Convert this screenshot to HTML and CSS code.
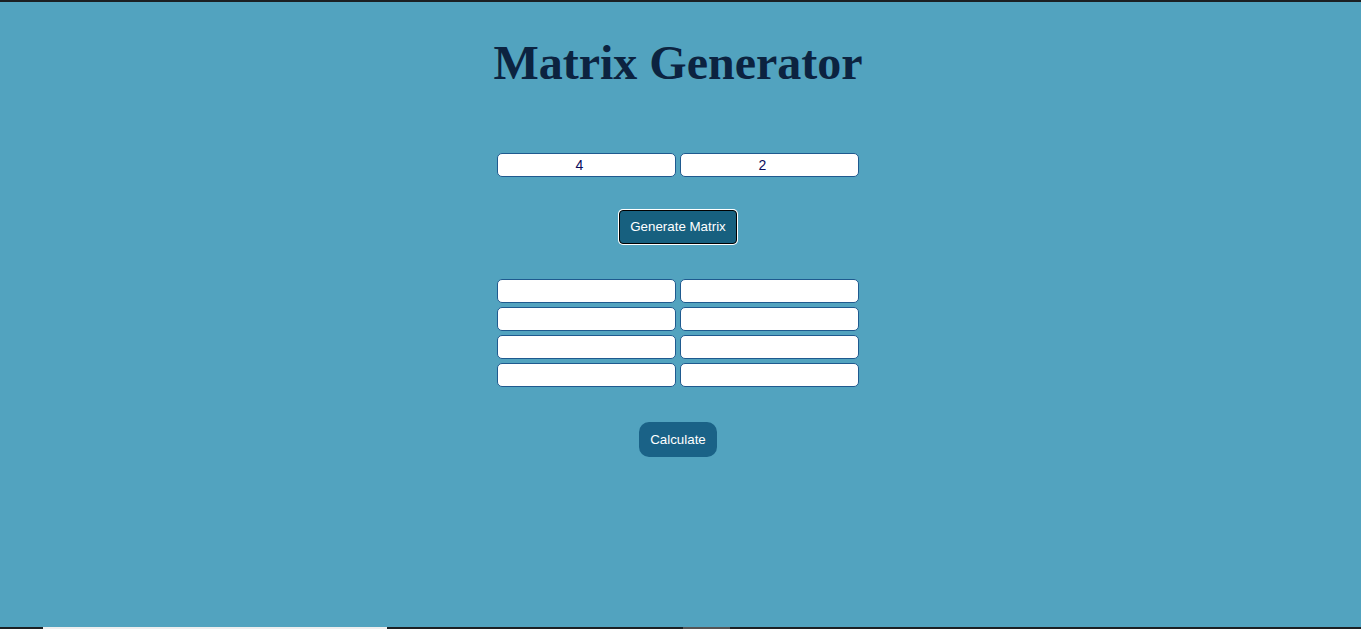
FILE: index.html
```html
<!DOCTYPE html>
<html lang="en">
<head>
<meta charset="utf-8">
<title>Matrix Generator</title>
<link rel="stylesheet" href="styles.css">
</head>
<body>
<main class="page">
  <h1 class="title">Matrix Generator</h1>
  <div class="dims">
    <input class="cell" type="text" value="4">
    <input class="cell" type="text" value="2">
  </div>
  <button class="gen-btn" type="button">Generate Matrix</button>
  <div class="matrix">
    <input class="cell" type="text">
    <input class="cell" type="text">
    <input class="cell" type="text">
    <input class="cell" type="text">
    <input class="cell" type="text">
    <input class="cell" type="text">
    <input class="cell" type="text">
    <input class="cell" type="text">
  </div>
  <button class="calc-btn" type="button">Calculate</button>
</main>
<div class="taskbar">
  <span class="tb-white"></span>
  <span class="tb-grey"></span>
</div>
</body>
</html>
```

FILE: styles.css
```css
html, body {
  margin: 0;
  padding: 0;
  height: 100%;
}
body {
  background: #52a3bf;
  border-top: 2px solid #1c2023;
  box-sizing: border-box;
  font-family: "Liberation Sans", Arial, sans-serif;
  overflow: hidden;
}
.page {
  display: flex;
  flex-direction: column;
  align-items: center;
  padding-right: 5px;
}
.title {
  font-family: "Liberation Serif", "Times New Roman", serif;
  font-weight: bold;
  font-size: 48px;
  line-height: 55px;
  color: #0c2340;
  margin: 33px 0 0 0;
}
.dims {
  display: flex;
  gap: 4px;
  margin-top: 63px;
}
.matrix {
  display: grid;
  grid-template-columns: 179px 179px;
  column-gap: 4px;
  row-gap: 4px;
  margin-top: 35px;
}
.cell {
  width: 179px;
  height: 24px;
  box-sizing: border-box;
  border: 1px solid #1f5a8f;
  border-radius: 5px;
  background: #fff;
  text-align: center;
  font-family: "Liberation Sans", Arial, sans-serif;
  font-size: 14px;
  color: #0a0a5a;
  padding: 0 16px 0 2px;
  margin: 0;
}
.gen-btn {
  margin-top: 33px;
  background: #17607f;
  color: #fff;
  font-family: "Liberation Sans", Arial, sans-serif;
  font-size: 13.33px;
  line-height: 16px;
  padding: 8px 10px;
  border: 1px solid #000;
  border-radius: 4px;
  box-shadow: 0 0 0 1px #fff;
}
.calc-btn {
  margin-top: 35px;
  background: #1a6287;
  color: #fff;
  font-family: "Liberation Sans", Arial, sans-serif;
  font-size: 13.33px;
  line-height: 15px;
  padding: 10px 11px;
  border: none;
  border-radius: 10px;
}
.taskbar {
  position: fixed;
  left: 0;
  right: 0;
  bottom: 0;
  height: 2px;
  background: #1c2023;
}
.tb-white {
  position: absolute;
  left: 43px;
  width: 344px;
  top: 0;
  height: 2px;
  background: #eeeeee;
}
.tb-grey {
  position: absolute;
  left: 683px;
  width: 47px;
  top: 0;
  height: 2px;
  background: #555;
}
```
